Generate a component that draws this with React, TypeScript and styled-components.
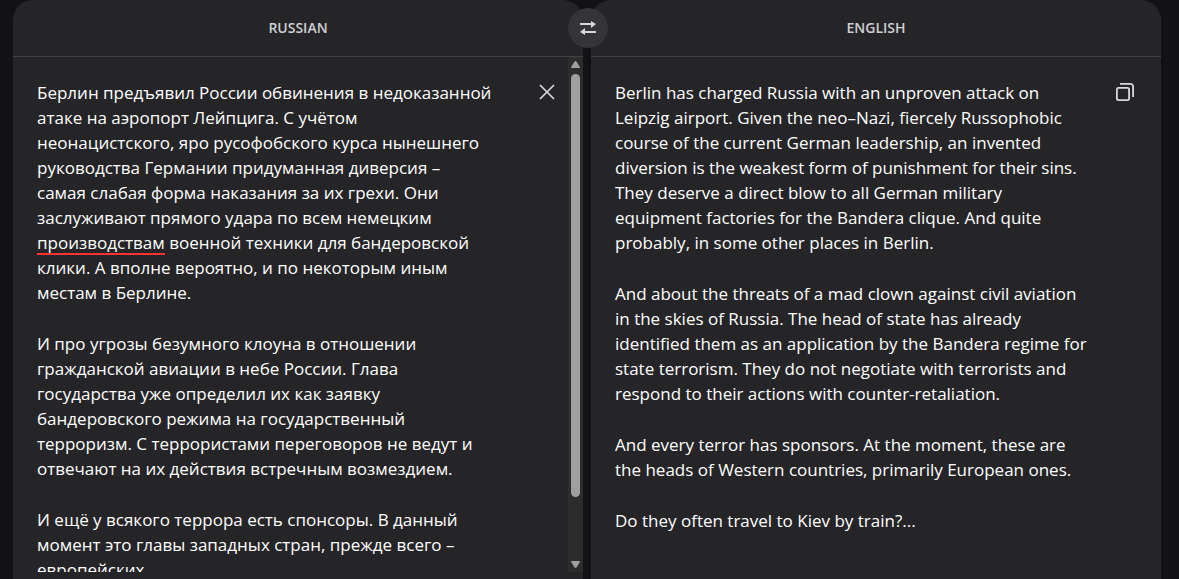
import React from 'react';
import styled, { createGlobalStyle } from 'styled-components';

const GlobalStyle = createGlobalStyle`
  *, *::before, *::after { box-sizing: border-box; }
  body {
    margin: 0;
    background: #121214;
    color: #ffffff;
    font-family: "Open Sans", "Noto Sans", sans-serif;
  }
  button { font: inherit; color: inherit; border: 0; padding: 0; background: none; cursor: pointer; }
`;

const Translator = styled.main`
  position: relative;
  display: grid;
  grid-template-columns: minmax(0, 1fr) minmax(0, 1fr);
  gap: 8px;
  height: 100vh;
  padding: 0 18px 0 13px;
`;

const Panel = styled.section`
  display: flex;
  flex-direction: column;
  min-height: 0;
  background: #252527;
  border-radius: 20px 20px 0 0;
`;

const PanelHeader = styled.header`
  display: flex;
  flex: none;
  justify-content: center;
  align-items: center;
  height: 57px;
  padding-right: 0;
  border-bottom: 1px solid #424244;
`;

const LanguageButton = styled.button`
  && {
    padding: 8px 12px;
    color: #cfcfd1;
    font-size: 14px;
    font-weight: 600;
    line-height: 20px;
    text-transform: uppercase;
  }
`;

const PanelBody = styled.div<{ $scrolls?: boolean }>`
  display: flex;
  flex: 1;
  align-items: stretch;
  min-height: 0;
  margin-bottom: 7px;
  padding-left: 24px;
  padding-right: ${({ $scrolls }) => ($scrolls ? 0 : 24)}px;
  overflow: hidden;
`;

const TextArea = styled.div`
  flex: 1;
  min-width: 0;
  padding-top: 23px;
  font-size: 17px;
  line-height: 25px;
  white-space: pre;
  outline: none;
`;

const Paragraph = styled.p`
  margin: 0 0 26px;
`;

const Misspelled = styled.span`
  text-decoration: underline 2px #f33;
  text-decoration-skip-ink: none;
  text-underline-offset: 4px;
`;

const IconButton = styled.button`
  && {
    display: flex;
    flex: none;
    justify-content: center;
    align-items: center;
    width: 24px;
    height: 24px;
    margin-top: 23px;
    color: #d8d8da;
  }
`;

const ClearButton = styled(IconButton)`
  && { margin-right: 9px; }
`;

const SwapButton = styled.button`
  && {
    position: absolute;
    top: 8px;
    left: calc(50% - 22px);
    display: flex;
    justify-content: center;
    align-items: center;
    width: 40px;
    height: 40px;
    border-radius: 50%;
    background: #343437;
    color: #d8d8da;
  }
`;

const ScrollTrack = styled.div`
  display: flex;
  flex: none;
  flex-direction: column;
  align-items: center;
  width: 15px;
  padding: 4px 0;
  background: #2c2c2c;
  color: #9f9f9f;
`;

const ScrollRail = styled.div`
  flex: 1;
  width: 9px;
  margin: 6px 0;
`;

const ScrollThumb = styled.div`
  height: 88%;
  border-radius: 5px;
  background: #9f9f9f;
`;

const source = [
  {
    before: `Берлин предъявил России обвинения в недоказанной
атаке на аэропорт Лейпцига. С учётом
неонацистского, яро русофобского курса нынешнего
руководства Германии придуманная диверсия –
самая слабая форма наказания за их грехи. Они
заслуживают прямого удара по всем немецким
`,
    misspelled: 'производствам',
    after: ` военной техники для бандеровской
клики. А вполне вероятно, и по некоторым иным
местам в Берлине.`,
  },
  {
    before: `И про угрозы безумного клоуна в отношении
гражданской авиации в небе России. Глава
государства уже определил их как заявку
бандеровского режима на государственный
терроризм. С террористами переговоров не ведут и
отвечают на их действия встречным возмездием.`,
  },
  {
    before: `И ещё у всякого террора есть спонсоры. В данный
момент это главы западных стран, прежде всего –
европейских.`,
  },
];

const translation = [
  `Berlin has charged Russia with an unproven attack on
Leipzig airport. Given the neo–Nazi, fiercely Russophobic
course of the current German leadership, an invented
diversion is the weakest form of punishment for their sins.
They deserve a direct blow to all German military
equipment factories for the Bandera clique. And quite
probably, in some other places in Berlin.`,
  `And about the threats of a mad clown against civil aviation
in the skies of Russia. The head of state has already
identified them as an application by the Bandera regime for
state terrorism. They do not negotiate with terrorists and
respond to their actions with counter-retaliation.`,
  `And every terror has sponsors. At the moment, these are
the heads of Western countries, primarily European ones.`,
  `Do they often travel to Kiev by train?...`,
];

const SwapIcon = () => (
  <svg width="16" height="14" viewBox="0 0 16 14" fill="none" aria-hidden="true">
    <path d="M0 3h12M4 11h12" stroke="currentColor" strokeWidth="2" />
    <path d="M11 0l5 3-5 4zM5 7l-5 4 5 3z" fill="currentColor" />
  </svg>
);

const CloseIcon = () => (
  <svg width="16" height="16" viewBox="0 0 16 16" fill="none" aria-hidden="true">
    <path d="M1 1l14 14M15 1L1 15" stroke="currentColor" strokeWidth="1.7" />
  </svg>
);

const CopyIcon = () => (
  <svg width="18" height="18" viewBox="0 0 18 18" fill="none" aria-hidden="true">
    <rect x="0.9" y="4.9" width="12.2" height="12.2" rx="1.6" stroke="currentColor" strokeWidth="1.8" />
    <path d="M4 0.9h10.5a2.6 2.6 0 0 1 2.6 2.6V14" stroke="currentColor" strokeWidth="1.8" />
  </svg>
);

const ScrollArrow = ({ down = false }: { down?: boolean }) => (
  <svg width="9" height="7" viewBox="0 0 9 7" aria-hidden="true">
    <path
      d={down ? 'M0.5 0h8q.5 0 .5.8L5.6 6.2q-1.1 1.6-2.2 0L0 .8Q0 0 .5 0z' : 'M0.5 7h8q.5 0 .5-.8L5.6.8q-1.1-1.6-2.2 0L0 6.2Q0 7 .5 7z'}
      fill="currentColor"
    />
  </svg>
);

export default function App() {
  return (
    <>
      <GlobalStyle />
      <Translator>
        <Panel>
          <PanelHeader>
            <LanguageButton type="button">Russian</LanguageButton>
          </PanelHeader>
          <PanelBody $scrolls>
            <TextArea
              role="textbox"
              aria-multiline="true"
              aria-label="Source text"
              lang="ru"
              contentEditable
              suppressContentEditableWarning
              spellCheck={false}
            >
              {source.map((part) => (
                <Paragraph key={part.before}>
                  {part.before}
                  {part.misspelled && <Misspelled>{part.misspelled}</Misspelled>}
                  {part.after}
                </Paragraph>
              ))}
            </TextArea>
            <ClearButton type="button" aria-label="Clear text">
              <CloseIcon />
            </ClearButton>
            <ScrollTrack aria-hidden="true">
              <ScrollArrow />
              <ScrollRail>
                <ScrollThumb />
              </ScrollRail>
              <ScrollArrow down />
            </ScrollTrack>
          </PanelBody>
        </Panel>
        <Panel>
          <PanelHeader>
            <LanguageButton type="button">English</LanguageButton>
          </PanelHeader>
          <PanelBody>
            <TextArea lang="en">
              {translation.map((text) => (
                <Paragraph key={text}>{text}</Paragraph>
              ))}
            </TextArea>
            <IconButton type="button" aria-label="Copy translation">
              <CopyIcon />
            </IconButton>
          </PanelBody>
        </Panel>
        <SwapButton type="button" aria-label="Swap languages">
          <SwapIcon />
        </SwapButton>
      </Translator>
    </>
  );
}
